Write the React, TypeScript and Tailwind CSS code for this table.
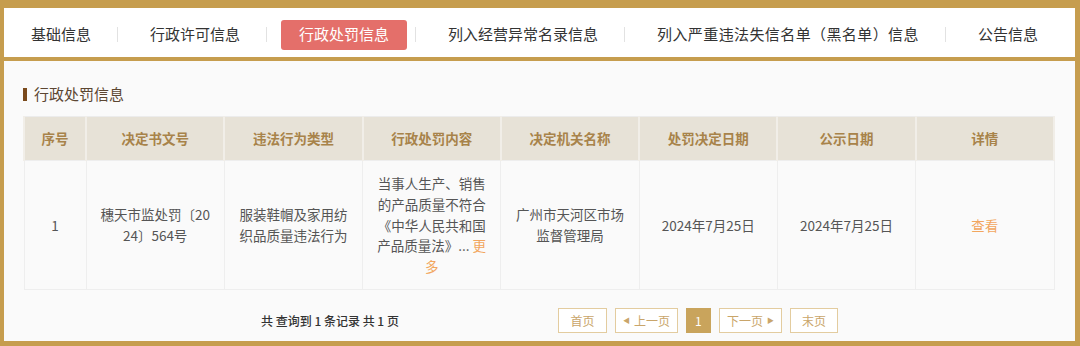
import React from "react";

const tabs = [
  "基础信息",
  "行政许可信息",
  "行政处罚信息",
  "列入经营异常名录信息",
  "列入严重违法失信名单（黑名单）信息",
  "公告信息",
];

const headers = [
  "序号",
  "决定书文号",
  "违法行为类型",
  "行政处罚内容",
  "决定机关名称",
  "处罚决定日期",
  "公示日期",
  "详情",
];

export default function App() {
  return (
    <div
      className="w-[1080px] h-[346px] bg-[#c69d4e] pt-[8px] pl-[4px] pr-[5px] pb-[5px] flex flex-col gap-[4px]"
      style={{ fontFamily: '"Noto Sans CJK SC", "Noto Sans", sans-serif' }}
    >
      {/* TABS */}
      <nav className="h-[49px] bg-white flex items-center pl-[9px] pt-[4px] text-[15px] text-[#333]">
        {tabs.map((t, i) => (
          <React.Fragment key={t}>
            {i > 0 && <span className="w-px h-[15px] bg-[#e2e2e2] ml-[8px] mr-[14px]" />}
            {i === 2 ? (
              <span className="h-[30px] px-[18px] flex items-center rounded-[3px] bg-[#e46f6a] text-white">
                {t}
              </span>
            ) : (
              <span className={i === 4 ? "px-[18px] tracking-[0.4px]" : "px-[18px]"}>{t}</span>
            )}
          </React.Fragment>
        ))}
      </nav>

      {/* PANEL */}
      <section className="flex-1 bg-[#fafafa] px-[19px]">
        <div className="mt-[23px] h-[20px] flex items-center gap-[7px]">
          <span className="w-[4px] h-[13px] bg-[#7a4a1c]" />
          <h2 className="text-[15px] text-[#5c4632]">行政处罚信息</h2>
        </div>

        <table className="mt-[12px] w-[1032px] table-fixed border-collapse border border-[#ececec] text-[13.5px]">
          <colgroup>
            <col className="w-[62px]" />
            {headers.slice(1).map((h) => (
              <col key={h} />
            ))}
          </colgroup>
          <thead>
            <tr className="h-[44px] bg-[#e7e2d7]">
              {headers.map((h) => (
                <th key={h} className="border-x-2 border-[#f1eee8] font-bold text-[#a8834a] text-center">
                  {h}
                </th>
              ))}
            </tr>
          </thead>
          <tbody>
            <tr className="h-[129px] text-[#555] text-center leading-[20.7px]">
              <td className="border border-[#eeeeee]">1</td>
              <td className="border border-[#eeeeee] px-[12px]">
                穗天市监处罚〔20
                <br />
                24〕564号
              </td>
              <td className="border border-[#eeeeee] px-[12px]">
                服装鞋帽及家用纺
                <br />
                织品质量违法行为
              </td>
              <td className="border border-[#eeeeee] px-[10px]">
                当事人生产、销售
                <br />
                的产品质量不符合
                <br />
                《中华人民共和国
                <br />
                产品质量法》... <span className="text-[#f2a65e]">更</span>
                <br />
                <span className="text-[#f2a65e]">多</span>
              </td>
              <td className="border border-[#eeeeee] px-[12px]">
                广州市天河区市场
                <br />
                监督管理局
              </td>
              <td className="border border-[#eeeeee]">2024年7月25日</td>
              <td className="border border-[#eeeeee]">2024年7月25日</td>
              <td className="border border-[#eeeeee] text-[#f2a65e]">查看</td>
            </tr>
          </tbody>
        </table>

        {/* FOOTER */}
        <div className="mt-[18px] h-[25px] flex items-center pl-[238px] text-[12px]">
          <span className="font-medium text-[#333] whitespace-pre">共 查询到 1 条记录 共 1 页</span>
          <div className="ml-[159px] flex items-center gap-[8px] text-[#c9a56a]">
            <button className="h-[25px] w-[49px] border border-[#e3cc9f] bg-white">首页</button>
            <button className="h-[25px] w-[63px] border border-[#e3cc9f] bg-white flex items-center justify-center gap-[4px]">
              <span className="text-[7px]">◀</span>上一页
            </button>
            <button className="h-[25px] w-[25px] bg-[#c9a45c] text-white">1</button>
            <button className="h-[25px] w-[63px] border border-[#e3cc9f] bg-white flex items-center justify-center gap-[4px]">
              下一页<span className="text-[7px]">▶</span>
            </button>
            <button className="h-[25px] w-[48px] border border-[#e3cc9f] bg-white">末页</button>
          </div>
        </div>
      </section>
    </div>
  );
}
